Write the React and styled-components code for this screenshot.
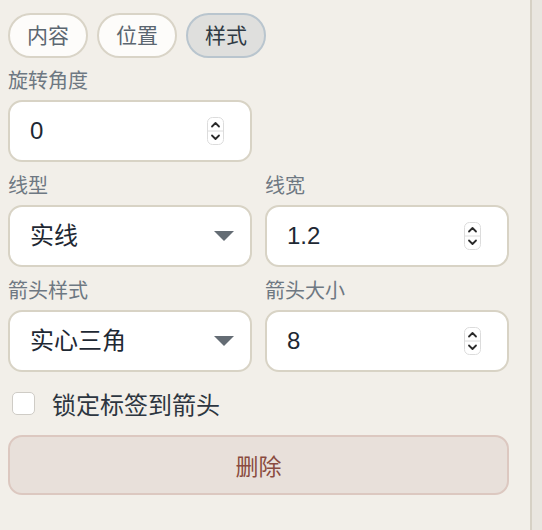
import React from 'react';
import styled, { createGlobalStyle } from 'styled-components';

const GlobalStyle = createGlobalStyle`
  html, body {
    margin: 0;
    padding: 0;
    background: #e9e6e0;
  }

  body {
    font-family: "Liberation Sans", "Noto Sans CJK SC", sans-serif;
  }

  * {
    box-sizing: border-box;
  }
`;

const Page = styled.div`
  display: flex;
  min-height: 530px;
`;

const Panel = styled.div`
  width: 532px;
  flex-shrink: 0;
  min-height: 530px;
  display: flex;
  flex-direction: column;
  padding: 13px 21px 0 8px;
  background: #f2efe9;
  border-right: 2px solid #d6d1c5;
`;

const Tabs = styled.div`
  display: flex;
  gap: 9px;
`;

const Tab = styled.button`
  height: 45px;
  padding: 0 17px;
  border-radius: 999px;
  border: 2px solid ${({ $active }) => ($active ? '#b9c5ce' : '#d9d4c7')};
  background: ${({ $active }) => ($active ? '#dfdfdd' : '#fdfcfa')};
  color: ${({ $active }) => ($active ? '#2f3a44' : '#5b6670')};
  font-family: inherit;
  font-size: 21px;
  line-height: 1;
  cursor: pointer;
`;

const Grid = styled.div`
  display: grid;
  grid-template-columns: repeat(2, minmax(0, 1fr));
  column-gap: 13px;
  row-gap: 11px;
  margin-top: 10px;
`;

const Field = styled.div`
  display: flex;
  flex-direction: column;
  min-width: 0;
`;

const Label = styled.div`
  font-size: 20px;
  line-height: 26px;
  color: #6e7882;
  margin-bottom: 6px;
`;

const Box = styled.div`
  height: 62px;
  display: flex;
  align-items: center;
  justify-content: space-between;
  padding: ${({ $select }) => ($select ? '0 16px 0 20px' : '0 26px 0 18px')};
  background: #ffffff;
  border: 2px solid #d8d3c5;
  border-radius: 14px;
  color: #1e2833;
  font-size: 24px;
`;

const NumberInput = styled.input`
  flex: 1;
  width: 100%;
  min-width: 0;
  border: none;
  outline: none;
  background: transparent;
  padding: 0 0 0 2px;
  font-family: inherit;
  font-size: 24px;
  color: #1e2833;
`;

const SelectValue = styled.span`
  line-height: 1;
`;

const CheckRow = styled.label`
  display: flex;
  align-items: center;
  gap: 17px;
  height: 30px;
  margin-top: 16px;
  padding-left: 4px;
  font-size: 24px;
  color: #2d3640;
`;

const CheckBox = styled.span`
  width: 23px;
  height: 23px;
  border-radius: 5px;
  border: 1px solid #cfccc6;
  background: #ffffff;
`;

const DeleteButton = styled.button`
  height: 60px;
  margin-top: 17px;
  border-radius: 14px;
  border: 2px solid #dcc8c0;
  background: #e8e0da;
  color: #8a4b40;
  font-family: inherit;
  font-size: 23px;
  cursor: pointer;
`;

const Spinner = () => (
  <svg width="17" height="28" viewBox="0 0 17 28">
    <rect x="0.5" y="0.5" width="16" height="27" rx="5" fill="#fff" stroke="#dcdcdc" />
    <line x1="1" y1="14" x2="16" y2="14" stroke="#dcdcdc" />
    <path d="M5 9.5 L8.5 6 L12 9.5" fill="none" stroke="#2a2a2a" strokeWidth="1.8" strokeLinecap="round" strokeLinejoin="round" />
    <path d="M5 18.5 L8.5 22 L12 18.5" fill="none" stroke="#2a2a2a" strokeWidth="1.8" strokeLinecap="round" strokeLinejoin="round" />
  </svg>
);

const Caret = () => (
  <svg width="20" height="10" viewBox="0 0 20 10">
    <path d="M0 0 H20 L10 10 Z" fill="#646c74" />
  </svg>
);

const NumberField = ({ label, value }) => (
  <Field>
    <Label>{label}</Label>
    <Box>
      <NumberInput type="text" defaultValue={value} size={1} />
      <Spinner />
    </Box>
  </Field>
);

const SelectField = ({ label, value }) => (
  <Field>
    <Label>{label}</Label>
    <Box $select>
      <SelectValue>{value}</SelectValue>
      <Caret />
    </Box>
  </Field>
);

const tabs = [
  { name: '内容' },
  { name: '位置' },
  { name: '样式', active: true },
];

export default function App() {
  return (
    <>
      <GlobalStyle />
      <Page>
        <Panel>
          <Tabs>
            {tabs.map((t) => (
              <Tab key={t.name} $active={t.active}>
                {t.name}
              </Tab>
            ))}
          </Tabs>
          <Grid>
            <NumberField label="旋转角度" value="0" />
            <div />
            <SelectField label="线型" value="实线" />
            <NumberField label="线宽" value="1.2" />
            <SelectField label="箭头样式" value="实心三角" />
            <NumberField label="箭头大小" value="8" />
          </Grid>
          <CheckRow>
            <CheckBox />
            锁定标签到箭头
          </CheckRow>
          <DeleteButton>删除</DeleteButton>
        </Panel>
      </Page>
    </>
  );
}
